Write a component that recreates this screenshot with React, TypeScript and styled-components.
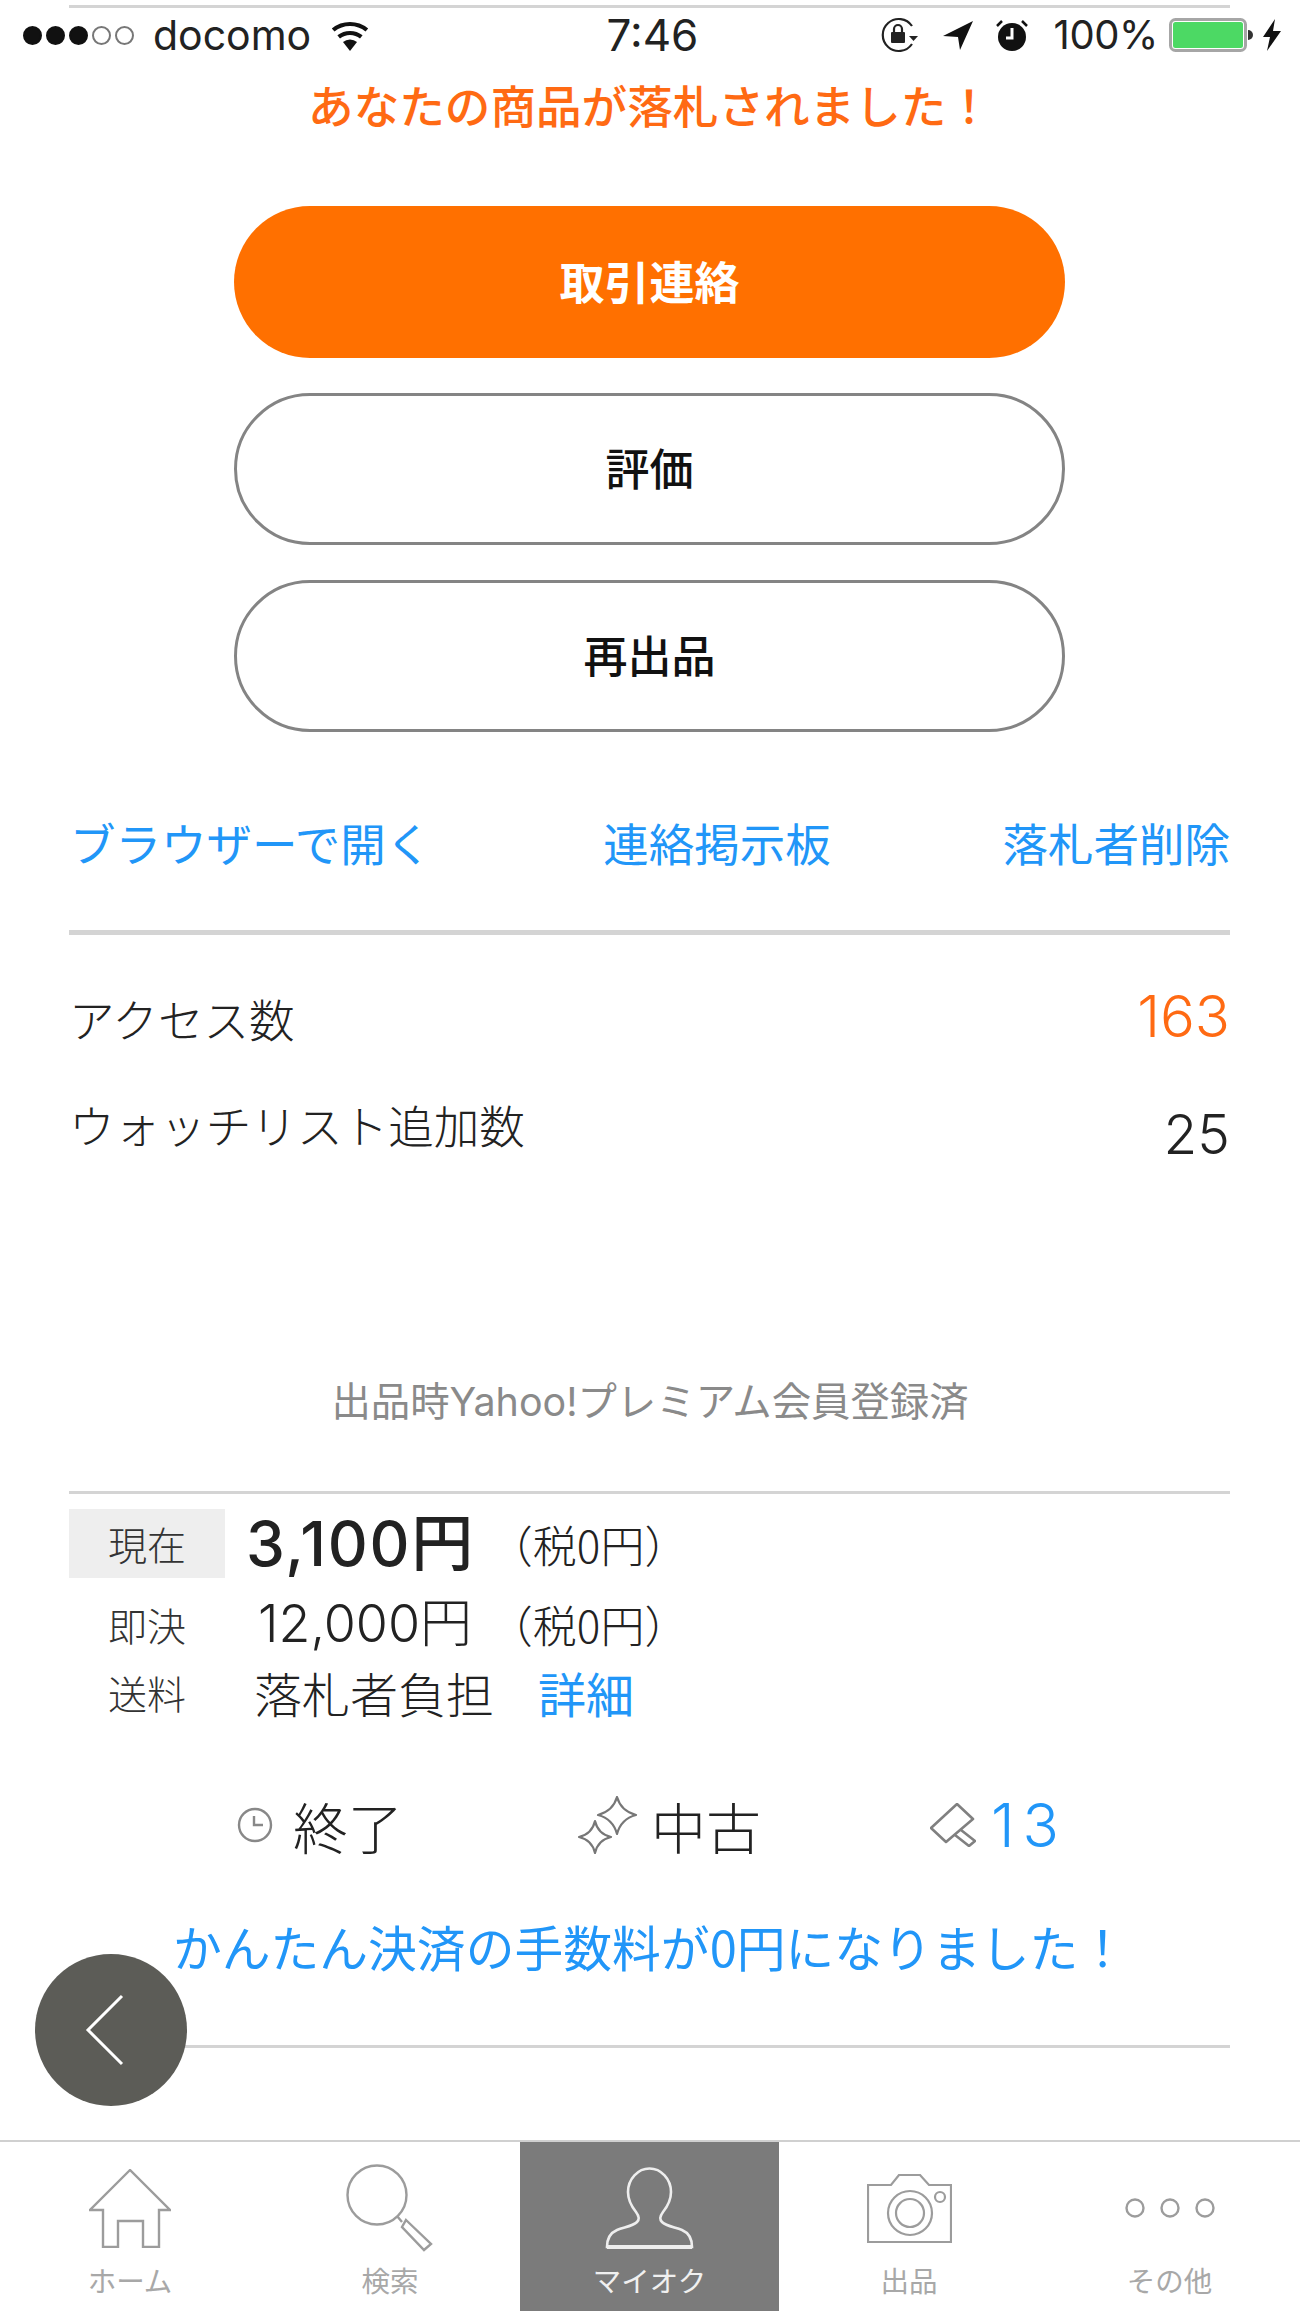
import React from "react";
import styled, { createGlobalStyle } from "styled-components";

const jp = `"Noto Sans CJK JP", "Noto Sans", sans-serif`;
const latin = `"Inter", "Noto Sans CJK JP", sans-serif`;
const BLUE = "#2196f8";
const ORANGE = "#ff7000";
const INK = "#222";

const Global = createGlobalStyle`
  html, body { margin: 0; padding: 0; background: #fff; }
  * { box-sizing: border-box; }
`;

const Page = styled.div`
  position: relative;
  width: 1300px;
  height: 2311px;
  overflow: hidden;
  display: flex;
  flex-direction: column;
  background: #fff;
  font-family: ${jp};
  color: ${INK};
`;

const Rule = styled.div<{ $top: number; $h?: number }>`
  margin: ${(p) => p.$top}px 70px 0 69px;
  height: ${(p) => p.$h ?? 3}px;
  flex: none;
  background: #d4d4d4;
`;

const StatusBar = styled.div`
  display: grid;
  grid-template-columns: 1fr auto 1fr;
  align-items: center;
  height: 54px;
  padding: 0 18px 0 23px;
  flex: none;
`;

const StatusLeft = styled.div`
  display: flex;
  align-items: center;
`;

const Dot = styled.span<{ $on: boolean }>`
  width: 19px;
  height: 19px;
  margin-right: 4px;
  border-radius: 50%;
  border: 2px solid ${(p) => (p.$on ? "#111" : "#777")};
  background: ${(p) => (p.$on ? "#111" : "transparent")};
`;

const Carrier = styled.span`
  margin: 0 18px 0 15px;
  font: 400 41px/1 "Inter", "Liberation Sans", sans-serif;
`;

const Clock = styled.span`
  font: 400 44px/1 "Inter", "Liberation Sans", sans-serif;
`;

const StatusRight = styled.div`
  display: flex;
  align-items: center;
  justify-content: flex-end;
`;

const BatteryText = styled.span`
  margin: 0 11px 0 24px;
  font: 400 40px/1 "Inter", "Liberation Sans", sans-serif;
  letter-spacing: -0.4px;
`;

const Notice = styled.div`
  height: 88px;
  flex: none;
  display: flex;
  align-items: center;
  justify-content: center;
  color: #ff6a13;
  font-size: 45.6px;
  font-weight: 500;
  line-height: 1.2;
  padding-bottom: 3px;
`;

const Actions = styled.div`
  display: flex;
  flex-direction: column;
  gap: 35px;
  margin-top: 56px;
  padding: 0 235px 0 234px;
`;

const ActionButton = styled.div<{ $primary?: boolean }>`
  height: 152px;
  border-radius: 76px;
  display: flex;
  align-items: center;
  justify-content: center;
  padding-bottom: 4px;
  font-size: ${(p) => (p.$primary ? 45 : 44)}px;
  font-weight: ${(p) => (p.$primary ? 700 : 500)};
  color: ${(p) => (p.$primary ? "#fff" : "#111")};
  background: ${(p) => (p.$primary ? ORANGE : "#fff")};
  border: ${(p) => (p.$primary ? "none" : "3px solid #848484")};
`;

const LinkRow = styled.div`
  display: flex;
  justify-content: space-between;
  align-items: center;
  height: 100px;
  margin-top: 60px;
  padding: 0 70px 0 70px;
  color: ${BLUE};
  font-size: 45.5px;
  line-height: 1.2;
  flex: none;
`;

const StatRow = styled.div<{ $top: number; $h: number }>`
  display: flex;
  justify-content: space-between;
  align-items: center;
  margin-top: ${(p) => p.$top}px;
  height: ${(p) => p.$h}px;
  padding: 0 70px 0 69px;
  font-size: 45.6px;
  font-weight: 300;
  line-height: 1.2;
  flex: none;
`;

const StatValue = styled.span<{ $accent?: boolean; $shift?: number }>`
  font-family: ${latin};
  font-size: ${(p) => (p.$accent ? 58 : 55)}px;
  font-weight: 300;
  line-height: 1;
  color: ${(p) => (p.$accent ? "#ff6a13" : INK)};
  transform: translateY(${(p) => p.$shift ?? 0}px);
`;

const Premium = styled.div`
  margin-top: 214px;
  height: 60px;
  flex: none;
  display: flex;
  align-items: center;
  justify-content: center;
  color: #8a8a8a;
  font-family: ${latin};
  font-size: 39.4px;
  font-weight: 400;
  line-height: 1.2;
`;

const PriceTable = styled.div`
  display: grid;
  grid-template-columns: 156px auto auto 1fr;
  align-items: center;
  margin-top: 15px;
  padding-left: 69px;
`;

const Tag = styled.div<{ $active?: boolean; $h: number; $drop?: number }>`
  height: ${(p) => p.$h}px;
  padding-top: ${(p) => p.$drop ?? 0}px;
  display: flex;
  align-items: center;
  justify-content: center;
  font-size: 39px;
  font-weight: 300;
  line-height: 1;
  color: #333;
  background: ${(p) => (p.$active ? "#eeeeee" : "transparent")};
`;

const Amount = styled.div<{ $big?: boolean; $drop?: number }>`
  margin-left: ${(p) => (p.$big ? 21 : 33)}px;
  padding-top: ${(p) => p.$drop ?? 0}px;
  font-family: ${latin};
  font-size: ${(p) => (p.$big ? 62 : 52)}px;
  font-weight: ${(p) => (p.$big ? 500 : 300)};
  letter-spacing: ${(p) => (p.$big ? 1.7 : 0)}px;
  line-height: 1;
`;

const Tax = styled.div<{ $drop?: number }>`
  margin-left: 14px;
  padding-top: ${(p) => p.$drop ?? 0}px;
  font-size: 44px;
  font-weight: 300;
  line-height: 1;
  text-spacing-trim: space-all;
`;

const Shipping = styled.div`
  grid-column: 2 / 5;
  margin-left: 29px;
  display: flex;
  align-items: center;
  font-size: 48px;
  font-weight: 300;
  line-height: 1;
`;

const DetailLink = styled.span`
  margin-left: 44px;
  color: ${BLUE};
  font-weight: 400;
`;

const Facts = styled.div`
  display: flex;
  align-items: center;
  margin-top: 62px;
  padding-left: 237px;
  height: 90px;
  flex: none;
`;

const Fact = styled.div<{ $gap: number; $w: number }>`
  display: flex;
  align-items: center;
  width: ${(p) => p.$w}px;
  gap: ${(p) => p.$gap}px;
  font-size: 55px;
  font-weight: 300;
  line-height: 1.2;
`;

const BidCount = styled.span`
  color: ${BLUE};
  font-family: ${latin};
  font-size: 60px;
  font-weight: 300;
  letter-spacing: 8px;
  line-height: 1;
`;

const Promo = styled.div`
  margin-top: 31px;
  height: 90px;
  flex: none;
  display: flex;
  align-items: center;
  justify-content: center;
  color: ${BLUE};
  font-size: 48.8px;
  line-height: 1.2;
`;

const BackButton = styled.div`
  position: absolute;
  left: 35px;
  top: 1954px;
  width: 152px;
  height: 152px;
  border-radius: 50%;
  background: #5c5c57;
  display: flex;
  align-items: center;
  justify-content: center;
`;

const TabBar = styled.div`
  margin-top: auto;
  height: 171px;
  flex: none;
  border-top: 2px solid #d0d0d0;
  display: grid;
  grid-template-columns: 260px 260px 259px 260px 261px;
`;

const Tab = styled.div<{ $active?: boolean }>`
  display: flex;
  flex-direction: column;
  align-items: center;
  background: ${(p) => (p.$active ? "#7b7b7b" : "transparent")};
  color: ${(p) => (p.$active ? "#f0f0f0" : "#a8a8a8")};
  font-size: 28.5px;
  line-height: 1;
`;

const TabIcon = styled.div`
  height: 112px;
  width: 100%;
  display: flex;
  align-items: center;
  justify-content: center;
  padding-top: 20px;
`;

const TabLabel = styled.span`
  margin-top: 12px;
`;

const LockRotation = () => (
  <svg width="42" height="36" viewBox="0 0 42 36" fill="none">
    <path d="M33 9A16 16 0 1 0 33 27" stroke="#222" strokeWidth="2.2" />
    <path d="M30 19h9l-4.5 5z" fill="#222" />
    <rect x="12" y="15" width="14" height="11" rx="1" fill="#222" />
    <path d="M15 15v-3a4 4 0 0 1 8 0v3" stroke="#222" strokeWidth="2.2" />
  </svg>
);

const LocationArrow = () => (
  <svg width="32" height="32" viewBox="0 0 32 32" style={{ marginLeft: 21 }}>
    <path d="M31 2 1 17l15 1 2 13z" fill="#111" />
  </svg>
);

const AlarmClock = () => (
  <svg width="36" height="32" viewBox="0 0 36 32" fill="none" style={{ marginLeft: 20 }}>
    <circle cx="18" cy="18" r="14" fill="#111" />
    <path d="M18 9v10h-6" stroke="#fff" strokeWidth="3" />
    <path d="M3 7l5-5M33 7l-5-5" stroke="#111" strokeWidth="2.5" />
  </svg>
);

const Battery = () => (
  <svg width="85" height="34" viewBox="0 0 85 34" fill="none">
    <rect x="1.5" y="1.5" width="75" height="31" rx="5" fill="#fff" stroke="#a6a6a6" strokeWidth="3" />
    <rect x="4" y="4" width="70" height="26" rx="2.5" fill="#4cd964" />
    <path d="M79 12a5 5 0 0 1 0 10z" fill="#333" />
  </svg>
);

const Bolt = () => (
  <svg width="20" height="32" viewBox="0 0 20 32" style={{ marginLeft: 8 }}>
    <path d="M13 0 1 18h7l-3 14 14-20h-8z" fill="#111" />
  </svg>
);

const Wifi = () => (
  <svg width="42" height="32" viewBox="2.8 0 36.4 32" fill="#111">
    <path d="M21 32 14 23a11 11 0 0 1 14 0z" />
    <path d="M11 19.5a16 16 0 0 1 20 0l2.6-3.2a20.5 20.5 0 0 0-25.2 0z" />
    <path d="M5.5 12.6a24.5 24.5 0 0 1 31 0l2.7-3.2a29 29 0 0 0-36.4 0z" />
  </svg>
);

const Chevron = () => (
  <svg width="44" height="72" viewBox="0 0 44 72" fill="none" style={{ marginRight: 10 }}>
    <path d="M38 2 4 36l34 34" stroke="#fff" strokeWidth="3" />
  </svg>
);

const ClockGlyph = () => (
  <svg width="36" height="36" viewBox="0 0 36 36" fill="none" stroke="#888" strokeWidth="2.4">
    <circle cx="18" cy="18" r="16" />
    <path d="M17 9v9h9" />
  </svg>
);

const Sparkle = () => (
  <svg width="60" height="58" viewBox="0 0 60 58" fill="none" stroke="#777" strokeWidth="2.2" strokeLinejoin="round">
    <path d="M39 1Q43 15 58 19 43 23 39 38 35 23 20 19 35 15 39 1Z" />
    <path d="M17 25Q20 38 33 41 20 44 17 57 14 44 1 41 14 38 17 25Z" />
  </svg>
);

const Hammer = () => (
  <svg width="46" height="44" viewBox="0 0 46 44" fill="none" stroke="#808080" strokeWidth="2.6" strokeLinejoin="round">
    <path d="M27 1 43 16 16 39 1 25z" />
    <path d="M31 27 45 38 39 43 25 32" />
  </svg>
);

const HomeGlyph = () => (
  <svg width="82" height="79" viewBox="0 0 82 79" fill="none" stroke="#9c9c9c" strokeWidth="2.4">
    <path d="M41 1 1 41H14V78H29V52H54V78H70V41H81z" />
  </svg>
);

const SearchGlyph = () => (
  <svg width="88" height="88" viewBox="0 0 88 88" fill="none" stroke="#9c9c9c" strokeWidth="2.4">
    <circle cx="31" cy="31" r="29.5" />
    <path d="M51 52 56 58M60 56 85 80 78 86 56 63z" />
  </svg>
);

const PersonGlyph = () => (
  <svg width="89" height="82" viewBox="0 0 89 82" fill="none" stroke="#eeeeee" strokeWidth="2.6">
    <path d="M44.5 1.5C33 1.5 23 12 23 25 23 34 27 40 31 45 34 49 35 52 32 55 28 59 20 60 12 63 5 66 2 71 2 80H87C87 71 84 66 77 63 69 60 61 59 57 55 54 52 55 49 58 45 62 40 66 34 66 25 66 12 56 1.5 44.5 1.5Z" />
    <path d="M2 80H87" strokeWidth="4" />
  </svg>
);

const CameraGlyph = () => (
  <svg width="85" height="69" viewBox="0 0 85 69" fill="none" stroke="#9c9c9c" strokeWidth="2.2">
    <path d="M1 11H24L32 1H53L62 11H84V68H1z" />
    <circle cx="43" cy="39" r="22" />
    <circle cx="43" cy="39" r="14" />
    <circle cx="73" cy="23" r="5" />
  </svg>
);

const MoreGlyph = () => (
  <svg width="90" height="22" viewBox="0 0 90 22" fill="none" stroke="#9c9c9c" strokeWidth="2.4">
    <circle cx="10" cy="11" r="8.5" />
    <circle cx="45" cy="11" r="8.5" />
    <circle cx="80" cy="11" r="8.5" />
  </svg>
);

const tabs = [
  { label: "ホーム", icon: <HomeGlyph /> },
  { label: "検索", icon: <SearchGlyph /> },
  { label: "マイオク", icon: <PersonGlyph />, active: true },
  { label: "出品", icon: <CameraGlyph /> },
  { label: "その他", icon: <MoreGlyph /> },
];

export default function App() {
  return (
    <Page>
      <Global />
      <Rule $top={5} />
      <StatusBar>
        <StatusLeft>
          {[true, true, true, false, false].map((on, i) => (
            <Dot key={i} $on={on} />
          ))}
          <Carrier>docomo</Carrier>
          <Wifi />
        </StatusLeft>
        <Clock>7:46</Clock>
        <StatusRight>
          <LockRotation />
          <LocationArrow />
          <AlarmClock />
          <BatteryText>100%</BatteryText>
          <Battery />
          <Bolt />
        </StatusRight>
      </StatusBar>

      <Notice>あなたの商品が落札されました！</Notice>

      <Actions>
        <ActionButton $primary>取引連絡</ActionButton>
        <ActionButton>評価</ActionButton>
        <ActionButton>再出品</ActionButton>
      </Actions>

      <LinkRow>
        <span>ブラウザーで開く</span>
        <span>連絡掲示板</span>
        <span>落札者削除</span>
      </LinkRow>
      <Rule $top={38} $h={5} />

      <StatRow $top={48} $h={70}>
        <span>アクセス数</span>
        <StatValue $accent $shift={-2}>163</StatValue>
      </StatRow>
      <StatRow $top={36} $h={70}>
        <span>ウォッチリスト追加数</span>
        <StatValue $shift={10}>25</StatValue>
      </StatRow>

      <Premium>出品時Yahoo!プレミアム会員登録済</Premium>
      <Rule $top={58} />

      <PriceTable>
        <Tag $active $h={69}>現在</Tag>
        <Amount $big>3,100円</Amount>
        <Tax>（税0円）</Tax>
        <span />
        <Tag $h={88} $drop={4}>即決</Tag>
        <Amount $drop={4}>12,000円</Amount>
        <Tax $drop={4}>（税0円）</Tax>
        <span />
        <Tag $h={52}>送料</Tag>
        <Shipping>
          落札者負担<DetailLink>詳細</DetailLink>
        </Shipping>
      </PriceTable>

      <Facts>
        <Fact $w={341} $gap={20}>
          <ClockGlyph />
          終了
        </Fact>
        <Fact $w={352} $gap={13}>
          <Sparkle />
          中古
        </Fact>
        <Fact $w={170} $gap={15}>
          <Hammer />
          <BidCount>13</BidCount>
        </Fact>
      </Facts>

      <Promo>かんたん決済の手数料が0円になりました！</Promo>
      <Rule $top={54} />

      <TabBar>
        {tabs.map((t) => (
          <Tab key={t.label} $active={t.active}>
            <TabIcon>{t.icon}</TabIcon>
            <TabLabel>{t.label}</TabLabel>
          </Tab>
        ))}
      </TabBar>

      <BackButton>
        <Chevron />
      </BackButton>
    </Page>
  );
}
